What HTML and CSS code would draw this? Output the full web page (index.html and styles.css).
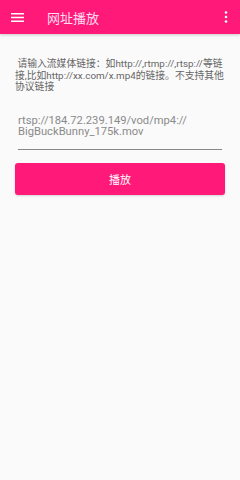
FILE: index.html
```html
<!DOCTYPE html>
<html>
<head>
<meta charset="utf-8">
<link rel="stylesheet" href="styles.css">
</head>
<body>
<div class="appbar">
  <div class="menu">
    <svg width="13" height="9" viewBox="0 0 13 9"><rect x="0" y="0" width="13" height="1.5" fill="#fff"/><rect x="0" y="3.75" width="13" height="1.5" fill="#fff"/><rect x="0" y="7.5" width="13" height="1.5" fill="#fff"/></svg>
  </div>
  <div class="title">网址播放</div>
  <div class="more">
    <svg width="4" height="12" viewBox="0 0 4 12"><circle cx="2" cy="1.5" r="1.3" fill="#fff"/><circle cx="2" cy="6" r="1.3" fill="#fff"/><circle cx="2" cy="10.5" r="1.3" fill="#fff"/></svg>
  </div>
</div>
<div class="content">
  <p class="hint">&nbsp;请输入流媒体链接：如http://,rtmp://,rtsp://等链接,比如http://xx.com/x.mp4的链接。不支持其他协议链接</p>
  <div class="field">rtsp://184.72.239.149/vod/mp4://<wbr>BigBuckBunny_175k.mov</div>
  <button class="play">播放</button>
</div>
</body>
</html>
```
FILE: styles.css
```css
html, body { margin: 0; padding: 0; }
body {
  width: 240px; height: 480px; background: #fafafa;
  font-family: Roboto, "Noto Sans CJK SC", sans-serif;
}
.appbar {
  height: 34px; background: #ff1a7a; display: flex; align-items: center;
  box-shadow: 0 1px 3px rgba(0,0,0,0.2);
  position: relative;
}
.menu { width: 13px; height: 9px; margin-left: 11px; display: flex; }
.title { color: #fde; font-size: 13px; margin-left: 23px; flex: 1; }
.more { margin-right: 12px; display: flex; }
.content { padding: 24px 18px 0 18px; }
.hint {
  margin: 0 -3px 0 -3px; font-size: 9.8px; line-height: 11.5px; color: #666;
  word-break: break-all;
}
.field {
  margin-top: 22px; font-size: 11.2px; line-height: 11.5px; color: #8a8a8a;
  padding-bottom: 11px; border-bottom: 1px solid #888;
  overflow-wrap: anywhere;
}
.play {
  display: block; margin: 13px -3px 0; width: calc(100% + 6px); height: 32px;
  background: #ff1a7a; color: #fff; border: none; border-radius: 3px;
  font-family: inherit; font-size: 11px;
  box-shadow: 0 1px 2px rgba(0,0,0,0.15);
}
```
